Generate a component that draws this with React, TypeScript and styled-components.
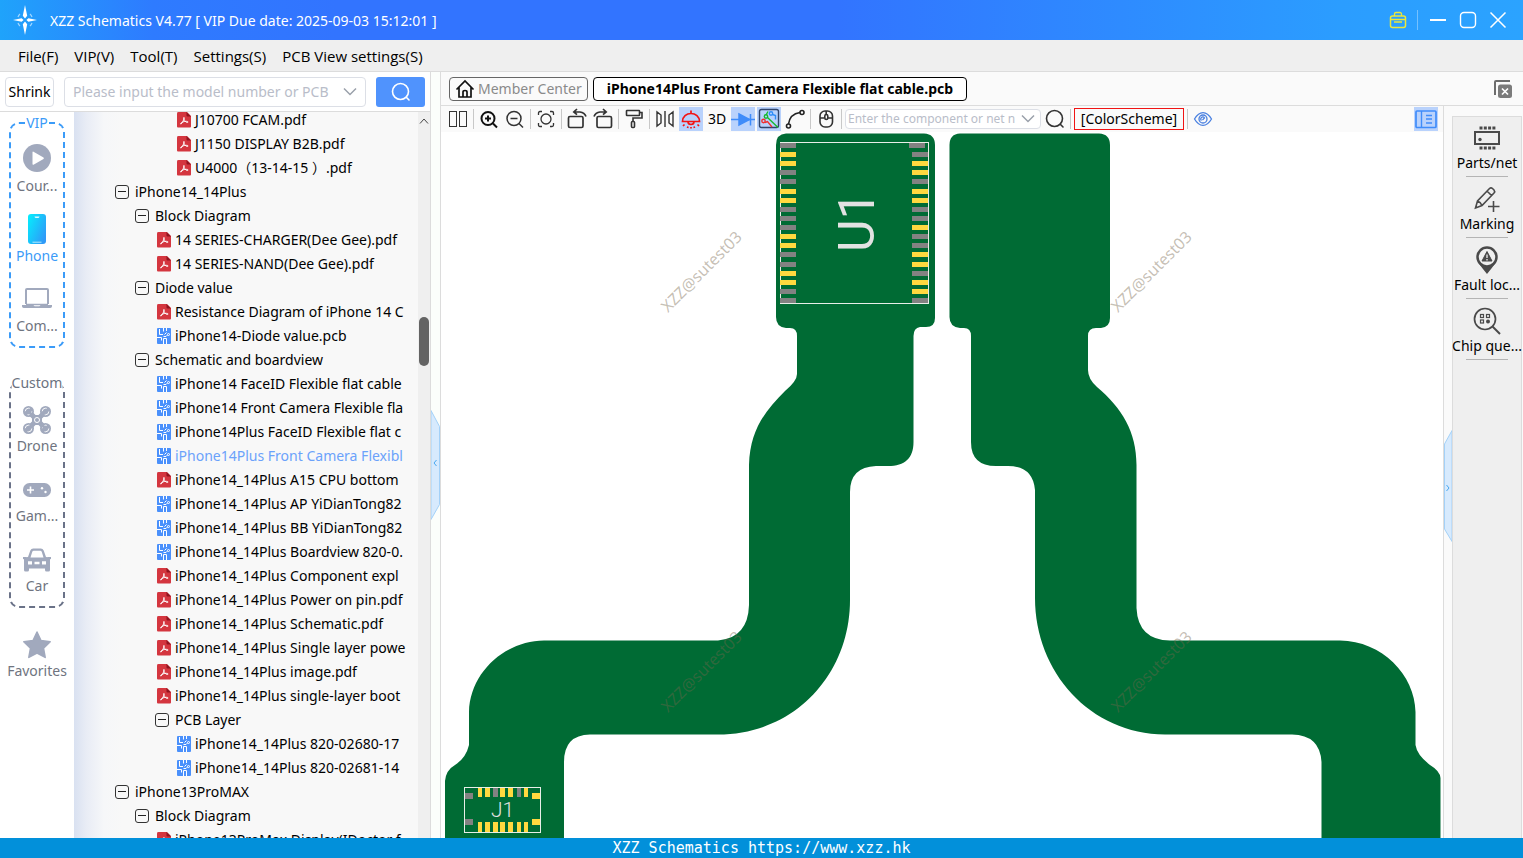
import React from "react";
import styled, { createGlobalStyle, css } from "styled-components";

const sans = `"Noto Sans", "Open Sans", "Noto Sans CJK SC", sans-serif`;

const GlobalStyle = createGlobalStyle`
  *, *::before, *::after { box-sizing: border-box; }
  body { margin: 0; font-family: ${sans}; font-size: 14px; line-height: 20px; color: #000; }
  button, input { font: inherit; color: inherit; }
  button { background: none; border: 0; padding: 0; }
  ul { list-style: none; margin: 0; padding: 0; }
  svg { display: block; flex: none; }
`;

const Window = styled.div`
  display: flex;
  flex-direction: column;
  height: 100vh;
  overflow: hidden;
  background: #fff;
`;

const TitleBar = styled.header`
  display: flex;
  align-items: center;
  height: 40px;
  flex: none;
  padding: 0 10px 0 12px;
  color: #fff;
  background: linear-gradient(90deg, #1fa3fb 0%, #2e7bff 10%, #3274ff 22%, #3274ff 55%, #2b9dff 88%, #2ba3ff 100%);
`;

const Title = styled.h1`
  flex: 1;
  margin: 0 0 0 12px;
  padding-top: 1px;
  font-size: 14px;
  font-weight: 400;
  line-height: 20px;
`;

const WindowButton = styled.button`
  display: grid;
  place-items: center;
  width: 30px;
  height: 30px;
`;

const TitleDivider = styled.span`
  width: 1px;
  height: 20px;
  margin: 0 5px 0 4px;
  background: rgba(255, 255, 255, 0.35);
`;

const MenuBar = styled.nav`
  display: flex;
  align-items: center;
  gap: 16px;
  flex: none;
  height: 32px;
  padding: 0 18px;
  background: #efefef;
  border-bottom: 1px solid #dcdcdc;
`;

const MenuItem = styled.button`
  font-family: "Open Sans", "Noto Sans", sans-serif;
  font-size: 15px;
  line-height: 20px;
`;

const Workspace = styled.div`
  display: flex;
  flex: 1;
  min-height: 0;
`;

const Sidebar = styled.aside`
  display: flex;
  flex-direction: column;
  flex: none;
  width: 431px;
  border-right: 1px solid #dcdcdc;
`;

const SearchRow = styled.form`
  display: flex;
  align-items: center;
  gap: 10px;
  flex: none;
  height: 40px;
  padding: 1px 5px 0;
  border-bottom: 1px solid #dcdcdc;
`;

const ShrinkButton = styled.button`
  flex: none;
  width: 49px;
  height: 30px;
  border: 1px solid #dcdfe6;
  border-radius: 4px;
  white-space: nowrap;
`;

const ComboBox = styled.div<{ $small?: boolean }>`
  display: flex;
  align-items: center;
  flex: 1;
  gap: 6px;
  min-width: 0;
  height: 30px;
  padding: 0 8px;
  background: #fff;
  border: 1px solid #dcdfe6;
  border-radius: 4px;

  input {
    flex: 1;
    min-width: 0;
    padding: 0;
    border: 0;
    outline: 0;
    background: none;
    line-height: 20px;
  }
  input::placeholder { color: #b9bdc9; opacity: 1; }

  ${(p) =>
    p.$small &&
    css`
      flex: none;
      width: 196px;
      height: 20px;
      padding: 0 5px 0 2px;
      margin: 0;
      input { font-size: 12px; line-height: 16px; }
    `}
`;

const SearchButton = styled.button`
  display: grid;
  place-items: center;
  flex: none;
  width: 49px;
  height: 30px;
  background: #5093fd;
  border-radius: 3px;
`;

const SidebarBody = styled.div`
  display: flex;
  flex: 1;
  min-height: 0;
`;

const Rail = styled.nav`
  flex: none;
  width: 74px;
  padding: 10px 9px 0;
  background: #fff;
  color: #6b7280;
`;

const RailGroup = styled.section<{ $accent: string }>`
  position: relative;
  margin-bottom: 34px;
  padding: 8px 0 4px;
  border: 2px dashed ${(p) => p.$accent};
  border-radius: 10px;

  & + & { margin-bottom: 9px; }
`;

const RailLegend = styled.h2<{ $color: string }>`
  position: absolute;
  top: -11px;
  left: 50%;
  transform: translateX(-50%);
  margin: 0;
  background: #fff;
  color: ${(p) => p.$color};
  font-size: 14px;
  font-weight: 400;
  line-height: 20px;
`;

const RailItem = styled.button<{ $active?: boolean; $tight?: boolean }>`
  display: flex;
  flex-direction: column;
  align-items: center;
  gap: ${(p) => (p.$tight ? 2 : 4)}px;
  width: 100%;
  height: 70px;
  padding-top: ${(p) => (p.$tight ? 14 : 12)}px;
  color: ${(p) => (p.$active ? "#3b9bf8" : "#6f7480")};
  white-space: nowrap;
`;

const RailIcon = styled.span`
  display: grid;
  place-items: center;
  height: 28px;
`;

const TreePane = styled.div`
  display: flex;
  flex: 1;
  min-width: 0;
  background: linear-gradient(90deg, #d9e1f1 0, #e8ecf5 12px, #f6f7f9 30px, #f8f8f8 48px);
`;

const Tree = styled.ul`
  flex: 1;
  min-width: 0;
  && { margin: -4px 12px 0 0; }
  overflow: hidden;
`;

const TreeRow = styled.li<{ $level: number; $active?: boolean }>`
  display: flex;
  align-items: center;
  height: 24px;
  padding-left: ${(p) => 21 + p.$level * 20}px;
  color: ${(p) => (p.$active ? "#6ba2fb" : "#000")};
  white-space: nowrap;
`;

const TreeLabel = styled.button`
  flex: none;
`;

const TreeGlyph = styled.span<{ $file?: boolean }>`
  flex: none;
  width: 20px;
  padding-left: ${(p) => (p.$file ? 2 : 0)}px;
`;

const ScrollTrack = styled.div`
  display: flex;
  flex-direction: column;
  align-items: center;
  flex: none;
  width: 12px;
  padding-top: 5px;
  background: #efefef;
`;

const ScrollSpace = styled.span<{ $grow: number }>`
  flex: ${(p) => p.$grow} 1 0;
`;

const ScrollThumb = styled.span`
  width: 10px;
  height: 49px;
  border-radius: 5px;
  background: #636363;
`;

const Splitter = styled.div`
  display: flex;
  align-items: center;
  flex: none;
  width: 9px;
  padding-top: 20px;
  background: #fbfefb;
`;

const Editor = styled.main`
  display: flex;
  flex-direction: column;
  flex: 1;
  min-width: 0;
  border-left: 1px solid #dcdcdc;
`;

const TabBar = styled.div`
  display: flex;
  align-items: center;
  gap: 5px;
  flex: none;
  height: 34px;
  padding: 0 11px 0 8px;
  background: #fafafa;
  border-bottom: 1px solid #dcdcdc;
`;

const Tab = styled.button<{ $active?: boolean }>`
  display: flex;
  align-items: center;
  gap: 3px;
  height: 24px;
  padding: 0 ${(p) => (p.$active ? 13 : 5)}px;
  border: 1px solid ${(p) => (p.$active ? "#000" : "#666")};
  border-radius: 4px;
  background: ${(p) => (p.$active ? "#fff" : "transparent")};
  color: ${(p) => (p.$active ? "#000" : "#8a8a8a")};
  font-weight: ${(p) => (p.$active ? 700 : 400)};
  white-space: nowrap;
`;

const CloseTabs = styled.button`
  margin-left: auto;
`;

const EditorBody = styled.div`
  display: flex;
  flex: 1;
  min-height: 0;
`;

const BoardColumn = styled.section`
  display: flex;
  flex-direction: column;
  flex: 1;
  min-width: 0;
`;

const Toolbar = styled.div`
  display: flex;
  align-items: center;
  gap: 2px;
  flex: none;
  height: 26px;
  padding: 0 5px;
  background: #fafafa;
`;

const ToolButton = styled.button<{ $on?: boolean }>`
  display: grid;
  place-items: center;
  flex: none;
  width: 24px;
  height: 24px;
  background: ${(p) => (p.$on ? "#b9d2fc" : "transparent")};
`;

const LayoutToggle = styled(ToolButton)`
  margin-left: auto;
`;

const ToolDivider = styled.span`
  flex: none;
  width: 1px;
  height: 20px;
  margin: 0 1px;
  background: #c8c8c8;
`;

const SchemeButton = styled.button`
  flex: none;
  width: 110px;
  height: 22px;
  border: 1px solid #f01414;
  line-height: 20px;
`;

const Board = styled.div`
  flex: 1;
  min-height: 0;
  overflow: hidden;
  background: #fff;

  svg { width: 100%; height: 100%; }
`;

const RightDock = styled.aside`
  display: flex;
  flex: none;
  background: #fafafa;
  border-left: 1px solid #dcdcdc;
`;

const DockSplitter = styled.div`
  display: flex;
  align-items: center;
  width: 8px;
  padding-top: 28px;
`;

const Dock = styled.nav`
  width: 70px;
  margin: 10px 1px 0 0;
  background: #efefef;
  border: 1px solid #dcdcdc;
  border-bottom: 0;
`;

const DockItem = styled.button`
  display: flex;
  flex-direction: column;
  align-items: center;
  width: 100%;
  height: 61px;
  padding-top: 7px;
  line-height: 22px;
  white-space: nowrap;

  &::after {
    content: "";
    width: 42px;
    height: 1px;
    margin-top: 2px;
    background: #b4b4b4;
  }
`;

const StatusBar = styled.footer`
  flex: none;
  height: 20px;
  background: #0290da;
  color: #fff;
  font-family: "DejaVu Sans Mono", "Liberation Mono", monospace;
  font-size: 15px;
  line-height: 20px;
  text-align: center;
`;

/* ---------- icons ---------- */

const Logo = () => (
  <svg width="26" height="30" viewBox="0 0 26 30">
    <g stroke="#9fd6ff" fill="none" strokeWidth="1.2">
      <path d="M8 9a8 8 0 0 0-2 3M18 9a8 8 0 0 1 2 3M8 21a8 8 0 0 1-2-3M18 21a8 8 0 0 0 2-3" />
    </g>
    <path d="M13 0l2.2 10.8L13 13.4l-2.2-2.6zM13 30l2.2-10.8L13 16.6l-2.2 2.6zM1 15l8.6-1.8 2 1.8-2 1.8zM25 15l-8.6-1.8-2 1.8 2 1.8z" fill="#fff" />
  </svg>
);

const ToolboxIcon = () => (
  <svg width="18" height="18" viewBox="0 0 18 18" fill="none" stroke="#ece83a" strokeWidth="1.5">
    <rect x="1.5" y="5" width="15" height="11.5" rx="2" />
    <path d="M5.5 5V3a1.5 1.5 0 0 1 1.500-1.500h4A1.500 1.500 0 0 1 12.500 3v2M2 8.500h14M5 11h8" strokeWidth="1.300" />
  </svg>
);

const MinimizeIcon = () => (
  <svg width="18" height="18" viewBox="0 0 18 18"><path d="M1 9h16" stroke="#fff" strokeWidth="2" /></svg>
);
const MaximizeIcon = () => (
  <svg width="18" height="18" viewBox="0 0 18 18"><rect x="1.500" y="1.500" width="15" height="15" rx="3.500" fill="none" stroke="#fff" strokeWidth="1.400" /></svg>
);
const CloseIcon = () => (
  <svg width="18" height="18" viewBox="0 0 18 18"><path d="M1.500 1.500l15 15M16.500 1.500l-15 15" stroke="#fff" strokeWidth="1.500" /></svg>
);

const Magnifier = ({ color, width = 1.6, size = 20 }: { color: string; width?: number; size?: number }) => (
  <svg width={size} height={size} viewBox="0 0 20 20" fill="none" stroke={color} strokeWidth={width} strokeLinecap="round">
    <circle cx="9.500" cy="9.500" r="8" />
    <path d="M15.300 15.300l2.700 2.700" />
  </svg>
);

const Chevron = () => (
  <svg width="14" height="10" viewBox="0 0 14 10"><path d="M1 1.500l6 6 6-6" fill="none" stroke="#9aa0aa" strokeWidth="1.500" /></svg>
);

const CourseIcon = () => (
  <svg width="28" height="28" viewBox="0 0 28 28"><circle cx="14" cy="14" r="14" fill="#a1a9bd" /><path d="M9.500 8.300v11.800q0 1 1 .6l10-5.700q.8-.7 0-1.400l-10-5.900q-1-.4-1 .6z" fill="#fff" /></svg>
);
const PhoneIcon = () => (
  <svg width="18" height="30" viewBox="0 0 18 30">
    <defs><linearGradient id="phone" x1="0" y1="0" x2="1" y2="0.700"><stop offset="0" stopColor="#04f0fd" /><stop offset="1" stopColor="#2f9af8" /></linearGradient></defs>
    <rect width="18" height="30" rx="3" fill="url(#phone)" />
    <path d="M6.500 2.500h5q-.3 1.500-1.500 1.500H8q-1.200 0-1.500-1.500z" fill="#d8fbff" /><path d="M4.500 28.200h9" stroke="#d8fbff" strokeWidth="0.800" />
  </svg>
);
const LaptopIcon = () => (
  <svg width="30" height="20" viewBox="0 0 30 20"><path d="M4 16V2q0-1 1-1h20q1 0 1 1v14" fill="none" stroke="#a1a9bd" strokeWidth="2" /><path d="M0 17h11.500q.5 1.300 1.500 1.300h4q1 0 1.500-1.300H30v1.500Q29.500 20 28 20H2q-1.500 0-2-1.500z" fill="#a1a9bd" /><path d="M4 16.500h22" stroke="#a1a9bd" strokeWidth="1.500" /></svg>
);
const DroneIcon = () => (
  <svg width="28" height="28" viewBox="0 0 28 28">
    <path d="M6 6l16 16M22 6L6 22" stroke="#a1a9bd" strokeWidth="5" />
    <rect x="9" y="9" width="10" height="10" rx="3" fill="#a1a9bd" />
    {[5.500, 22.500].map((x) => [5.500, 22.500].map((y) => (
      <g key={`${x}-${y}`}>
        <circle cx={x} cy={y} r="5.500" fill="#a1a9bd" />
        <circle cx={x} cy={y} r="3.300" fill="none" stroke="#fff" strokeWidth="0.900" strokeDasharray="6 4.400" />
      </g>
    )))}
    <path d="M5.500 5.500l4 4M22.500 5.500l-4 4M5.500 22.500l4-4M22.500 22.500l-4-4" stroke="#a1a9bd" strokeWidth="3" />
    <circle cx="14" cy="14" r="2.500" fill="none" stroke="#fff" strokeWidth="1" />
  </svg>
);
const GamepadIcon = () => (
  <svg width="28" height="14" viewBox="0 0 28 14"><rect width="28" height="14" rx="6.500" fill="#a1a9bd" /><path d="M7.500 3.500v7M4 7h7" stroke="#fff" strokeWidth="1.600" /><circle cx="19" cy="5.200" r="1.200" fill="#fff" /><circle cx="22.500" cy="9" r="1.200" fill="#fff" /></svg>
);
const CarIcon = () => (
  <svg width="28" height="24" viewBox="0 0 28 24">
    <path fillRule="evenodd" d="M5 9l2.300-6.500Q8.200.5 10.200.5h7.600q2 0 2.900 2L23 9l3.500.5Q28 10 27 12v10q0 1.500-1.500 1.500h-2Q22 23.500 22 22v-1.500H6V22q0 1.500-1.500 1.500h-2Q1 23.500 1 22V12q-1-2 .5-2.500zM7.500 9.500h13L18.800 3.900q-.4-1.200-1.600-1.200h-6.400q-1.200 0-1.600 1.200zM5 13.300v3.200h4v-3.200zM11.500 13.800v2.400h5v-2.400zM19 13.300v3.200h4v-3.200z" fill="#a1a9bd" />
    <path d="M0 9h3.500v2H0zM24.500 9H28v2h-3.500z" fill="#a1a9bd" />
  </svg>
);
const StarIcon = () => (
  <svg width="28" height="28" viewBox="0 0 28 28"><path d="M14 1l4 8.500 9.200 1.200-6.700 6.500 1.700 9.200L14 22l-8.200 4.400 1.700-9.200L.8 10.700 10 9.500z" fill="#a1a9bd" stroke="#a1a9bd" strokeLinejoin="round" strokeWidth="1.500" /></svg>
);

const ToggleIcon = () => (
  <svg width="14" height="14" viewBox="0 0 14 14"><rect x="0.500" y="0.500" width="13" height="13" rx="2.500" fill="none" stroke="#333" /><path d="M3 6.500h8" stroke="#222" /></svg>
);
const PdfIcon = () => (
  <svg width="14" height="16" viewBox="0 0 14 16">
    <path d="M1.500 0H10l4 4v10.500q0 1-1 1H1q-1 0-1-1V1.200Q0 0 1.500 0z" fill="#d4363f" />
    <path d="M9.500 0l4.500 4.500H10.500q-1 0-1-1z" fill="#8f1520" />
    <path d="M7 5.500c-1 0 .1 2.400 1.300 3.900 1.200 1.300 2.800 1.300 2.800.5S7 9 4.500 10.600C3 11.700 3.500 12.500 4.300 11.800 5.600 10.400 8 5.500 7 5.500z" fill="none" stroke="#fff" strokeWidth="1" />
  </svg>
);
const PcbIcon = () => (
  <svg width="14" height="16" viewBox="0 0 14 16">
    <rect width="14" height="16" rx="1" fill="#4a90fb" />
    <g fill="none" stroke="#fff" strokeWidth="1">
      <path d="M2.500 1v5.500H6M6.500 0v3.500M0 9.500h4.500v3M6.500 16V10.500h3V16M7.500 6.500L9.500 4.500M9.500 0v3" />
      <circle cx="11.500" cy="6.500" r="1" />
      <path d="M10.500 7L9 8.500H6.500" />
    </g>
  </svg>
);

const HandleLeft = () => (
  <svg width="9" height="110" viewBox="0 0 9 110"><path d="M0 .5l8.500 16v78L0 109.500z" fill="#d7eafd" stroke="#a3d1f8" /><path d="M5.500 50l-2.500 3 2.500 3" fill="none" stroke="#4aa8f0" /></svg>
);
const HandleRight = () => (
  <svg width="8" height="112" viewBox="0 0 8 112"><path d="M8 .5L.5 14v85L8 111.500z" fill="#d7eafd" stroke="#a3d1f8" /><path d="M2.500 55l2.500 3-2.500 3" fill="none" stroke="#4aa8f0" /></svg>
);

const HomeIcon = () => (
  <svg width="20" height="20" viewBox="0 0 20 20" fill="none" stroke="#111" strokeWidth="1.700"><path d="M1.500 10.500L10 2l8.500 8.500M4 8.500V18h12V8.500" /><path d="M8 18v-5q0-1.500 2-1.500t2 1.500v5" /></svg>
);
const CloseAllIcon = () => (
  <svg width="18" height="18" viewBox="0 0 18 18"><path d="M1 15V2q0-1 1-1h14" fill="none" stroke="#6d6d6d" strokeWidth="2" /><rect x="4" y="4.500" width="14" height="13.500" rx="2.500" fill="#7b7b7b" /><path d="M8 8.500l6 6M14 8.500l-6 6" stroke="#fff" strokeWidth="1.700" /></svg>
);

const T = ({ children, color = "#333", w = 1.4 }: { children: React.ReactNode; color?: string; w?: number }) => (
  <svg width="24" height="24" viewBox="0 0 24 24" fill="none" stroke={color} strokeWidth={w}>{children}</svg>
);

const SplitIcon = () => <T w={1}><rect x="3.500" y="4.500" width="7" height="15" /><rect x="13.500" y="4.500" width="7" height="15" /></T>;
const ZoomInIcon = () => <T color="#111" w={2}><circle cx="11" cy="11.500" r="6.500" /><path d="M16 16.500l4 4M8 11.500h6M11 8.500v6" /></T>;
const ZoomOutIcon = () => <T w={1.5}><circle cx="11" cy="11.500" r="7" /><path d="M16 16.500l4 4M7.500 11.500h7" /></T>;
const FitIcon = () => <T w={1.3}><circle cx="12" cy="12" r="5" /><path d="M4.500 8V6q0-1.500 1.500-1.500h2M16 4.500h2q1.500 0 1.500 1.500v2M19.500 16v2q0 1.500-1.500 1.500h-2M8 19.500H6q-1.500 0-1.500-1.500v-2" /></T>;
const RotateLeftIcon = () => <T w={1.7}><rect x="3.500" y="9.500" width="14.500" height="11" rx="1.500" /><path d="M9 5h6q4.500.5 6 4.500M12 2L8.800 5 12 7.700" /></T>;
const RotateRightIcon = () => <T w={1.7}><rect x="6" y="9.500" width="14.500" height="11" rx="1.500" /><path d="M15 5H9Q4.500 5.500 3 9.500M12 2l3.200 3L12 7.700" /></T>;
const RollerIcon = () => <T w={1.6}><rect x="4.500" y="3.500" width="13" height="5" rx="0.500" /><path d="M17.500 5.500H20v5.500h-9v3" /><rect x="9.500" y="14.500" width="3" height="6" rx="1" /></T>;
const MirrorIcon = () => <T w={1.4}><path d="M12 4v16M4 5v14l4-3V8zM20 5v14l-4-3V8z" /></T>;
const LampIcon = () => (
  <T color="#f21414" w={1.7}><path d="M12 3.500v3M3.500 14.500c0-5 4-8 8.500-8s8.500 3 8.500 8z" /><path d="M9 14.500q0 3 3 3t3-3M5.500 17.500L4 19M18.500 17.500L20 19M9 19.500L8.500 21M15 19.500l.5 1.500M12 20v1.500" /></T>
);
const DiodeIcon = () => <T color="#3f8cfa" w={1.5}><path d="M0 12.500h24M19.500 7v11.500" /><path d="M8 7l10.500 5.500L8 18z" fill="#3f8cfa" /></T>;
const NetIcon = () => (
  <svg width="24" height="24" viewBox="0 0 24 24" fill="none" strokeWidth="1.400">
    <rect x="2.500" y="2.500" width="19" height="18" rx="2" stroke="#30456b" />
    <g stroke="#f03030"><circle cx="6.500" cy="14" r="1.700" /><path d="M8 15.500l2.500-1 4.500 5.500" /></g>
    <g stroke="#17b92e"><circle cx="9" cy="9.500" r="1.700" /><path d="M10.500 10.500L21 20.500M9 8l2-3.500" /></g>
    <g stroke="#2f8df8"><circle cx="14" cy="6.500" r="1.700" /><path d="M15.500 7.500l3 1v4" /></g>
  </svg>
);
const CurveIcon = () => <T color="#222" w={1.6}><circle cx="5.500" cy="19" r="2" /><circle cx="19" cy="5.500" r="2" /><path d="M5.500 17C6.500 10 10 6.500 17 5.500" /></T>;
const MouseIcon = () => <T w={1.6}><rect x="6" y="4" width="12.500" height="16" rx="5" /><path d="M6 11h4.500M14 11h4.500M12.200 4v3.500" /><rect x="10.800" y="7.500" width="3" height="5" rx="1.500" /></T>;
const EyeIcon = () => <T color="#4a80e0" w={1.3}><path d="M3.500 12c5-8.500 12-8.500 17 0-5 8.500-12 8.500-17 0z" /><circle cx="12" cy="12" r="4" /><path d="M10.500 13.500a2 2 0 1 1 3-2.500l-2 2" /></T>;
const PanelIcon = () => (
  <svg width="24" height="24" viewBox="0 0 24 24" fill="none" stroke="#3f8cfa" strokeWidth="1.700"><rect x="2" y="4" width="20" height="16.500" rx="1" /><path d="M7.500 4v16.500M12 8.500h6M12 12h6M12 16h6" strokeWidth="1.400" /></svg>
);

const D = ({ children }: { children: React.ReactNode }) => (
  <svg width="28" height="28" viewBox="0 0 28 28" fill="none" stroke="#4a4a4a" strokeWidth="1.700">{children}</svg>
);
const ChipIcon = () => <D><rect x="2" y="8" width="24" height="12" strokeWidth="2" /><circle cx="7" cy="15.500" r="1.700" fill="#4a4a4a" stroke="none" /><path d="M6.500 4h16M6.500 24h16" strokeWidth="3" strokeDasharray="3 1.300" /></D>;
const MarkIcon = () => <D><path d="M2.500 23l2-7L16.500 3.500q1.500-1.300 3 0l1.500 1.500q1.300 1.500 0 3L9 20.500zM14 6l4.500 4.500M4.500 16q3 1 4.500 4.500M20.500 16v11M15 21.500h11.500" strokeWidth="1.600" /></D>;
const FaultIcon = () => (
  <D><circle cx="14" cy="11" r="9.500" strokeWidth="2.500" /><path d="M5.500 17Q9 22 14 28q5-6 8.500-11-8 7-17 0z" fill="#4a4a4a" stroke="none" /><path d="M14 5.500l5 9.500H9z" fill="#4a4a4a" strokeWidth="1" /><path d="M14 8.500v3.500M14 13v1.500" stroke="#efefef" strokeWidth="1.300" /></D>
);
const ChipSearchIcon = () => (
  <D><circle cx="12" cy="12" r="10.500" /><path d="M19.500 19.500l7.500 7.500" strokeWidth="2" /><g strokeWidth="1.200"><rect x="7.500" y="7.500" width="3" height="3" /><rect x="13.500" y="7.500" width="3" height="3" /><rect x="7.500" y="13" width="3" height="3" /></g><circle cx="15" cy="14.500" r="2" fill="#4a4a4a" stroke="none" /></D>
);

/* ---------- data ---------- */

type Node = { level: number; kind: "folder" | "pdf" | "pcb"; label: string; active?: boolean };
const node = (level: number, kind: Node["kind"], label: string, active = false): Node => ({ level, kind, label, active });

const tree: Node[] = [
  node(4, "pdf", "J10700 FCAM.pdf"),
  node(4, "pdf", "J1150 DISPLAY B2B.pdf"),
  node(4, "pdf", "U4000（13-14-15 ）.pdf"),
  node(1, "folder", "iPhone14_14Plus"),
  node(2, "folder", "Block Diagram"),
  node(3, "pdf", "14 SERIES-CHARGER(Dee Gee).pdf"),
  node(3, "pdf", "14 SERIES-NAND(Dee Gee).pdf"),
  node(2, "folder", "Diode value"),
  node(3, "pdf", "Resistance Diagram of iPhone 14 C"),
  node(3, "pcb", "iPhone14-Diode value.pcb"),
  node(2, "folder", "Schematic and boardview"),
  node(3, "pcb", "iPhone14 FaceID Flexible flat cable"),
  node(3, "pcb", "iPhone14 Front Camera Flexible fla"),
  node(3, "pcb", "iPhone14Plus FaceID Flexible flat c"),
  node(3, "pcb", "iPhone14Plus Front Camera Flexibl", true),
  node(3, "pdf", "iPhone14_14Plus A15 CPU bottom"),
  node(3, "pcb", "iPhone14_14Plus AP YiDianTong82"),
  node(3, "pcb", "iPhone14_14Plus BB YiDianTong82"),
  node(3, "pcb", "iPhone14_14Plus Boardview 820-0."),
  node(3, "pdf", "iPhone14_14Plus Component expl"),
  node(3, "pdf", "iPhone14_14Plus Power on pin.pdf"),
  node(3, "pdf", "iPhone14_14Plus Schematic.pdf"),
  node(3, "pdf", "iPhone14_14Plus Single layer powe"),
  node(3, "pdf", "iPhone14_14Plus image.pdf"),
  node(3, "pdf", "iPhone14_14Plus single-layer boot"),
  node(3, "folder", "PCB Layer"),
  node(4, "pcb", "iPhone14_14Plus 820-02680-17"),
  node(4, "pcb", "iPhone14_14Plus 820-02681-14"),
  node(1, "folder", "iPhone13ProMAX"),
  node(2, "folder", "Block Diagram"),
  node(3, "pdf", "iPhone13ProMax Display(IDoctor f"),
];

const menus = ["File(F)", "VIP(V)", "Tool(T)", "Settings(S)", "PCB View settings(S)"];

const dock = [
  { label: "Parts/net", icon: <ChipIcon /> },
  { label: "Marking", icon: <MarkIcon /> },
  { label: "Fault loc...", icon: <FaultIcon /> },
  { label: "Chip que...", icon: <ChipSearchIcon /> },
];

const padColor = (c: string) => (c === "Y" ? "#ffd93f" : "#828282");
const u1Left = "GYYGGYYGGGYYGGYYGG".split("");
const u1Right = "GGYYGYYGGYGGYYGYYG".split("");
const j1Pads: [number, number, string][] = [
  [478, 4, "Y"], [485, 5, "Y"], [493, 5, "G"], [500, 5, "Y"], [508, 5, "Y"], [517, 4, "G"], [524, 4, "Y"],
];
const watermarks = [[668, 313], [1118, 313], [668, 713], [1118, 713]];

const BoardDrawing = () => (
  <svg viewBox="441 132 1002 706" preserveAspectRatio="xMidYMin slice" fontFamily={sans}>
    <g fill="#006b34">
      <path d="M786 133.500H924Q935 134 935 145V318Q935 327 926 327H920Q913.500 328 913.500 336V442C913.500 458 905 466 888 466H876Q850 467 850 492V600C850 674 795 734.500 718 734.500H590Q564 735 564 762V838H445V781Q446 770 455 765Q466 758 469 745V712C470 672 505 641 544 640.500H718Q748 638 749 605V465C750 430 765 411 785 391Q797 381 797 374V336Q797 328 790 328H786Q776 327 776 317V145Q776 134 786 133.500Z" />
      <path d="M960 133.500H1099Q1110 134 1110 145V318Q1110 327 1101 328H1096Q1088 328 1088 336V370Q1088 379 1097 387C1122 408 1136.500 432 1136.500 465V608Q1138 640 1170 640.500H1340C1382 641 1415 675 1415.500 712V745Q1417 755 1430 765Q1440 771 1440.500 778V838H1321.500V762Q1320 735 1292 734.500H1165C1090 734 1035 672 1035 598V490Q1033 466 1008 466H996Q971 466 971 442V336Q971 328 964 328H960Q949.500 327 949.500 317V145Q949.500 134 960 133.500Z" />
    </g>
    <g fill="none" stroke="#e8eee8">
      <rect x="780.500" y="142.500" width="148" height="161" />
      <rect x="464.500" y="787.500" width="76" height="45" />
    </g>
    <g shapeRendering="crispEdges">
      {u1Left.map((c, i) => <rect key={i} x="780" y={143 + Math.round(i * 9.12)} width="16" height="5" fill={padColor(c)} />)}
      {u1Right.map((c, i) => <rect key={i} x={i === 0 ? 909 : 912} y={143 + Math.round(i * 9.12)} width="16" height="5" fill={padColor(c)} />)}
      {j1Pads.map(([x, w, c]) => <rect key={x} x={x} y="788" width={w} height="9" fill={padColor(c)} />)}
      {j1Pads.map(([x, w]) => <rect key={x} x={x} y="822" width={w} height="10" fill={padColor("Y")} />)}
      {[793, 819].map((y) => (
        <g key={y}>
          <rect x="465" y={y} width="8" height="6" fill={padColor("G")} />
          <rect x="532" y={y} width="8" height="6" fill={padColor("Y")} />
        </g>
      ))}
    </g>
    <g fontFamily="Roboto, sans-serif" fill="#e2e2e2">
      <text transform="translate(874 252) rotate(-90)" fontSize="50">U1</text>
      <text x="491" y="817" fontSize="21" fontWeight="300">J1</text>
    </g>
    <g fill="#75664c" fillOpacity="0.420" fontSize="16">
      {watermarks.map(([x, y]) => <text key={`${x}-${y}`} transform={`translate(${x} ${y}) rotate(-45)`}>XZZ@sutest03</text>)}
    </g>
  </svg>
);

export default function App() {
  return (
    <Window>
      <GlobalStyle />
      <TitleBar>
        <Logo />
        <Title>XZZ Schematics V4.77 [ VIP Due date: 2025-09-03 15:12:01 ]</Title>
        <WindowButton aria-label="Toolbox"><ToolboxIcon /></WindowButton>
        <TitleDivider />
        <WindowButton aria-label="Minimize"><MinimizeIcon /></WindowButton>
        <WindowButton aria-label="Maximize"><MaximizeIcon /></WindowButton>
        <WindowButton aria-label="Close"><CloseIcon /></WindowButton>
      </TitleBar>
      <MenuBar>{menus.map((m) => <MenuItem key={m}>{m}</MenuItem>)}</MenuBar>
      <Workspace>
        <Sidebar>
          <SearchRow onSubmit={(e) => e.preventDefault()}>
            <ShrinkButton type="button">Shrink</ShrinkButton>
            <ComboBox>
              <input aria-label="Model number or PCB" placeholder="Please input the model number or PCB" />
              <button type="button" aria-label="Show history"><Chevron /></button>
            </ComboBox>
            <SearchButton aria-label="Search"><Magnifier color="#fff" /></SearchButton>
          </SearchRow>
          <SidebarBody>
            <Rail>
              <RailGroup $accent="#3b9bf8">
                <RailLegend $color="#3b9bf8">VIP</RailLegend>
                <RailItem><RailIcon><CourseIcon /></RailIcon>Cour...</RailItem>
                <RailItem $active><RailIcon><PhoneIcon /></RailIcon>Phone</RailItem>
                <RailItem><RailIcon><LaptopIcon /></RailIcon>Com...</RailItem>
              </RailGroup>
              <RailGroup $accent="#6a7288">
                <RailLegend $color="#6b7280">Custom</RailLegend>
                <RailItem $tight><RailIcon><DroneIcon /></RailIcon>Drone</RailItem>
                <RailItem $tight><RailIcon><GamepadIcon /></RailIcon>Gam...</RailItem>
                <RailItem $tight><RailIcon><CarIcon /></RailIcon>Car</RailItem>
              </RailGroup>
              <RailItem $tight><RailIcon><StarIcon /></RailIcon>Favorites</RailItem>
            </Rail>
            <TreePane>
              <Tree>
                {tree.map((n, i) => (
                  <TreeRow key={i} $level={n.level} $active={n.active}>
                    <TreeGlyph $file={n.kind !== "folder"}>
                      {n.kind === "folder" ? <ToggleIcon /> : n.kind === "pdf" ? <PdfIcon /> : <PcbIcon />}
                    </TreeGlyph>
                    <TreeLabel>{n.label}</TreeLabel>
                  </TreeRow>
                ))}
              </Tree>
              <ScrollTrack>
                <svg width="10" height="8" viewBox="0 0 10 8"><path d="M1 6.500l4-4.500 4 4.500" fill="none" stroke="#444" /></svg>
                <ScrollSpace $grow={192} />
                <ScrollThumb />
                <ScrollSpace $grow={472} />
              </ScrollTrack>
            </TreePane>
          </SidebarBody>
        </Sidebar>
        <Splitter><button aria-label="Collapse file list"><HandleLeft /></button></Splitter>
        <Editor>
          <TabBar>
            <Tab><HomeIcon />Member Center</Tab>
            <Tab $active>iPhone14Plus Front Camera Flexible flat cable.pcb</Tab>
            <CloseTabs aria-label="Close all tabs"><CloseAllIcon /></CloseTabs>
          </TabBar>
          <EditorBody>
            <BoardColumn>
              <Toolbar>
                <ToolButton aria-label="Split view"><SplitIcon /></ToolButton>
                <ToolDivider />
                <ToolButton aria-label="Zoom in"><ZoomInIcon /></ToolButton>
                <ToolButton aria-label="Zoom out"><ZoomOutIcon /></ToolButton>
                <ToolDivider />
                <ToolButton aria-label="Fit to window"><FitIcon /></ToolButton>
                <ToolDivider />
                <ToolButton aria-label="Rotate left"><RotateLeftIcon /></ToolButton>
                <ToolButton aria-label="Rotate right"><RotateRightIcon /></ToolButton>
                <ToolDivider />
                <ToolButton aria-label="Paint"><RollerIcon /></ToolButton>
                <ToolDivider />
                <ToolButton aria-label="Mirror"><MirrorIcon /></ToolButton>
                <ToolButton $on aria-label="Highlight"><LampIcon /></ToolButton>
                <ToolButton>3D</ToolButton>
                <ToolButton $on aria-label="Diode values"><DiodeIcon /></ToolButton>
                <ToolButton $on aria-label="Net colours"><NetIcon /></ToolButton>
                <ToolButton aria-label="Jumper line"><CurveIcon /></ToolButton>
                <ToolDivider />
                <ToolButton aria-label="Mouse settings"><MouseIcon /></ToolButton>
                <ToolDivider />
                <ComboBox $small>
                  <input aria-label="Component or net name" placeholder="Enter the component or net n" />
                  <button type="button" aria-label="Show history"><Chevron /></button>
                </ComboBox>
                <ToolButton aria-label="Find"><Magnifier color="#333" /></ToolButton>
                <ToolDivider />
                <SchemeButton>[ColorScheme]</SchemeButton>
                <ToolDivider />
                <ToolButton aria-label="Preview"><EyeIcon /></ToolButton>
                <LayoutToggle $on aria-label="Toggle side panel"><PanelIcon /></LayoutToggle>
              </Toolbar>
              <Board><BoardDrawing /></Board>
            </BoardColumn>
            <RightDock>
              <DockSplitter><button aria-label="Collapse tools"><HandleRight /></button></DockSplitter>
              <Dock>
                {dock.map((d) => <DockItem key={d.label}>{d.icon}{d.label}</DockItem>)}
              </Dock>
            </RightDock>
          </EditorBody>
        </Editor>
      </Workspace>
      <StatusBar>XZZ Schematics https://www.xzz.hk</StatusBar>
    </Window>
  );
}
